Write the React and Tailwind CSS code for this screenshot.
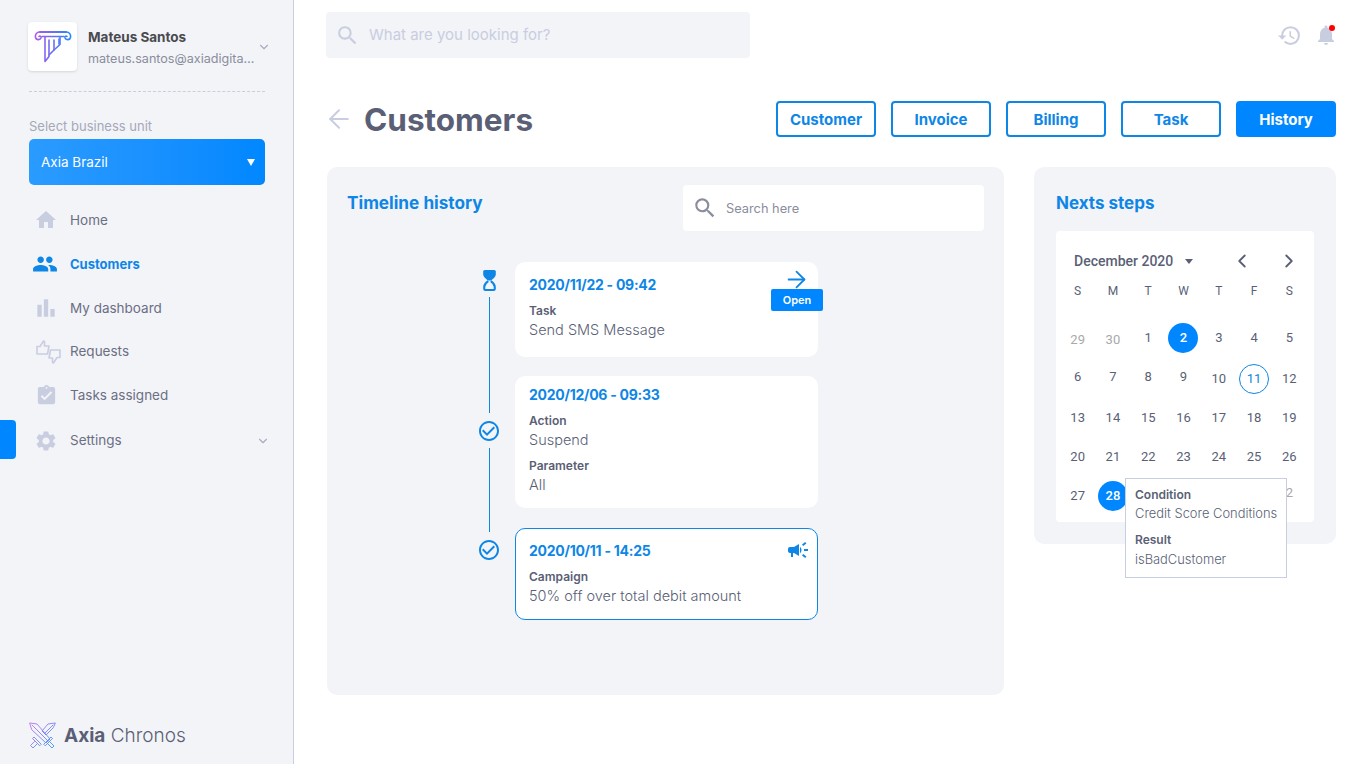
import React from "react";
import { ArrowLeft, ArrowRight, ChevronDown, ChevronLeft, ChevronRight } from "lucide-react";
import {
  MdAssignmentTurnedIn,
  MdBarChart,
  MdCampaign,
  MdCheckCircleOutline,
  MdHistory,
  MdHome,
  MdNotifications,
  MdPeople,
  MdSearch,
  MdSettings,
} from "react-icons/md";

function PillarLogo() {
  return (
    <svg width="38" height="34" viewBox="0 0 38 34" fill="none" strokeWidth="1.6" strokeLinecap="round" strokeLinejoin="round">
      <defs>
        <linearGradient id="pillar" x1="0" y1="0" x2="38" y2="0" gradientUnits="userSpaceOnUse">
          <stop offset="0" stopColor="#b455e8" />
          <stop offset="1" stopColor="#1d8bff" />
        </linearGradient>
      </defs>
      <g stroke="url(#pillar)">
        <path d="M6 2h26" strokeWidth="2.2" />
        <path d="M6 2C2 2 1 5 1.5 7.500 2 10 6 10.500 7 8 7.500 6.500 6 5.500 5 6.500" />
        <path d="M32 2c4 0 5 3 4.500 5.500-.5 2.500-4.500 3-5.500.5-.5-1.500 1-2.500 2-1.500" />
        <path d="M8 6.500h22" />
        <path d="M11 7v24.500l4-5V10" />
        <path d="M15 25l5-5V10" />
        <path d="M20 20l6-5.500V7" />
        <path d="M25 9v5" />
      </g>
    </svg>
  );
}

function SwordsLogo() {
  return (
    <svg width="27" height="28" viewBox="0 0 27 28" fill="none" strokeWidth="0.9" strokeLinejoin="round" strokeLinecap="round">
      <defs>
        <linearGradient id="swords" x1="0" y1="0" x2="27" y2="28" gradientUnits="userSpaceOnUse">
          <stop offset="0" stopColor="#c86be6" />
          <stop offset="1" stopColor="#2d9bff" />
        </linearGradient>
      </defs>
      <g stroke="url(#swords)">
        <path d="M1 1l7 1 13 15-4 4L3 8z" />
        <path d="M3 3l16 16" />
        <path d="M26 1l-7 1-6 7 4 4 7-7z" />
        <path d="M24 3l-8 8" />
        <path d="M15 22l7-7 1.500 1.500-7 7z" />
        <path d="M19 22l4 4 2-2-4-4" />
        <path d="M12 22L5 15l-1.500 1.500 7 7z" />
        <path d="M8 22l-4 4-2.500-2.500 4-4" />
      </g>
    </svg>
  );
}

function RequestsIcon() {
  return (
    <svg width="25" height="24" viewBox="0 0 25 24" fill="none" stroke="#c9cde0" strokeWidth="1.600" strokeLinejoin="round" strokeLinecap="round">
      <path d="M1 14V6.500h3L7.500 1l1 .5v4.500H13L11.500 14z" />
      <path d="M24 10v7.500h-3L17.500 23l-1-.5V18H13l1.500-8z" />
    </svg>
  );
}

function HourglassIcon() {
  return (
    <svg width="13" height="21" viewBox="0 0 12 20" className="mt-[8px] shrink-0">
      <path fill="#0e86e6" d="M1.500 0H10.500Q12 0 12 1.500V4Q12 6.500 7.500 10H4.500Q0 6.500 0 4V1.500Q0 0 1.500 0Z" />
      <path fill="none" stroke="#0e86e6" strokeWidth="2" d="M4.800 10.500Q1 13 1 16V18Q1 19 2 19H10Q11 19 11 18V16Q11 13 7.200 10.500" />
    </svg>
  );
}

function NavItem({ icon, label, active, className, children }) {
  return (
    <div className={`flex items-center ${className}`}>
      <div className="flex w-[41px] items-center justify-start">{icon}</div>
      <span className={active ? "pt-[2px] text-[13px] font-bold text-[#0e86e6]" : "text-[13.500px] text-[#6b6f84]"}>{label}</span>
      {children}
    </div>
  );
}

function Sidebar() {
  return (
    <aside className="relative flex h-full w-[294px] shrink-0 flex-col border-r border-[#c9cde0] bg-[#f3f4f8] pl-[29px] pr-[28px]">
      <div className="-mr-[8px] mt-[22px] flex items-center">
        <div className="-ml-px flex h-[49px] w-[49px] shrink-0 items-center justify-center rounded-[4px] bg-white shadow-sm">
          <PillarLogo />
        </div>
        <div className="ml-[11px] w-[167px] min-w-0">
          <div className="pt-[2px] text-[13.500px] font-bold leading-[18px] text-[#4a4a4f]">Mateus Santos</div>
          <div className="mt-[4px] truncate text-[12.600px] leading-[18px] text-[#8a8d9c]">mateus.santos@axiadigital.com</div>
        </div>
        <ChevronDown className="ml-[2px] h-[14px] w-[14px] shrink-0 text-[#a9adc0]" />
      </div>
      <div className="mt-[20px] border-t border-dashed border-[#c9cde0]" />
      <div className="mt-[26px] text-[13px] leading-[16px] text-[#a5a8b8]">Select business unit</div>
      <div className="mt-[5px] flex h-[46px] items-center justify-between rounded-[5px] bg-gradient-to-r from-[#2a9bff] to-[#0087ff] pl-[12px] pr-[10px]">
        <span className="text-[13.500px] text-white">Axia Brazil</span>
        <span className="h-0 w-0 border-x-[4px] border-t-[7px] border-x-transparent border-t-white" />
      </div>
      <nav className="mt-[13px] flex flex-col">
        <NavItem className="h-[44px]" label="Home" icon={<MdHome className="ml-[5px] h-[24px] w-[24px] text-[#c9cde0]" />} />
        <NavItem className="h-[44px]" active label="Customers" icon={<MdPeople className="ml-[3px] h-[26px] w-[26px] text-[#0e86e6]" />} />
        <NavItem className="h-[44px]" label="My dashboard" icon={<MdBarChart className="ml-[4px] h-[26px] w-[26px] text-[#c9cde0]" />} />
        <NavItem className="h-[43px]" label="Requests" icon={<div className="ml-[7px]"><RequestsIcon /></div>} />
        <NavItem className="h-[44px]" label="Tasks assigned" icon={<MdAssignmentTurnedIn className="ml-[6px] h-[23px] w-[23px] text-[#c9cde0]" />} />
        <NavItem className="h-[45px] pt-[2px]" label="Settings" icon={<MdSettings className="ml-[5px] h-[24px] w-[24px] text-[#c9cde0]" />}>
          <ChevronDown className="ml-auto mr-[-5px] h-[14px] w-[14px] text-[#a9adc0]" />
        </NavItem>
      </nav>
      <div className="absolute left-0 top-[420px] h-[39px] w-[16px] rounded-r-[4px] bg-[#0087ff]" />
      <div className="mb-[14px] mt-auto flex items-center">
        <SwordsLogo />
        <span className="ml-[8px] text-[19px] text-[#5a5f76]">
          <b className="font-bold">Axia</b> <span className="font-light">Chronos</span>
        </span>
      </div>
    </aside>
  );
}

function TopBar() {
  return (
    <div className="flex items-center justify-between">
      <div className="-ml-px flex h-[46px] w-[424px] items-center rounded-[4px] bg-[#f3f4f8] pl-[9px]">
        <MdSearch className="h-[25px] w-[25px] text-[#c9cde0]" />
        <span className="ml-[9px] text-[15px] text-[#c9cde0]">What are you looking for?</span>
      </div>
      <div className="-mr-[2px] flex items-center gap-[12px]">
        <MdHistory className="h-[25px] w-[25px] text-[#c9cde0]" />
        <div className="relative">
          <MdNotifications className="h-[24px] w-[24px] text-[#c9cde0]" />
          <span className="absolute right-[3px] top-[2px] h-[6px] w-[6px] rounded-full bg-[#f00]" />
        </div>
      </div>
    </div>
  );
}

function TabButton({ label, active }) {
  return (
    <button
      className={
        active
          ? "h-[36px] w-[100px] rounded-[4px] border-2 border-[#0087ff] bg-[#0087ff] pt-[2px] text-[15px] font-bold text-white"
          : "h-[36px] w-[100px] rounded-[4px] border-2 border-[#0e86e6] bg-white pt-[2px] text-[15px] font-bold text-[#0e86e6]"
      }
    >
      {label}
    </button>
  );
}

function Field({ label, value, className }) {
  return (
    <div className={className}>
      <div className="text-[12px] font-semibold leading-[14px] text-[#5a5f76]">{label}</div>
      <div className="mt-[2px] text-[14.500px] font-light leading-[20px] text-[#5a5f76]">{value}</div>
    </div>
  );
}

function DateTitle({ children }) {
  return <div className="text-[14px] font-bold leading-[20px] tracking-[-0.26px] text-[#0e86e6]">{children}</div>;
}

function Timeline() {
  return (
    <div className="flex flex-col pl-[142px]">
      {/* row 1 */}
      <div className="flex h-[114px]">
        <div className="flex w-[46px] flex-col items-center pr-[6px]">
          <HourglassIcon />
          <div className="mt-[6px] w-px flex-1 bg-[#0e86e6]" />
        </div>
        <div className="relative h-[95px] w-[303px] rounded-[10px] bg-white pl-[14px] pt-[13px]">
          <DateTitle>2020/11/22 - 09:42</DateTitle>
          <Field className="mt-[9px]" label="Task" value="Send SMS Message" />
          <ArrowRight className="absolute right-[8px] top-[4px] h-[27px] w-[27px] text-[#0e86e6]" strokeWidth={1.600} />
          <div className="absolute right-[-5px] top-[27px] flex h-[22px] w-[52px] items-center justify-center rounded-[2px] bg-[#0087ff] text-[11px] font-semibold text-white">
            Open
          </div>
        </div>
      </div>
      {/* row 2 */}
      <div className="flex h-[152px]">
        <div className="flex w-[46px] flex-col items-center pr-[6px]">
          <div className="h-[37px] w-px bg-[#0e86e6]" />
          <MdCheckCircleOutline className="mb-[5px] mt-[6px] h-[24px] w-[24px] shrink-0 text-[#0e86e6]" />
          <div className="w-px flex-1 bg-[#0e86e6]" />
        </div>
        <div className="h-[132px] w-[303px] rounded-[10px] bg-white pl-[14px] pt-[9px]">
          <DateTitle>2020/12/06 - 09:33</DateTitle>
          <Field className="mt-[9px]" label="Action" value="Suspend" />
          <Field className="mt-[9px]" label="Parameter" value="All" />
        </div>
      </div>
      {/* row 3 */}
      <div className="flex">
        <div className="flex w-[46px] flex-col items-center pr-[6px]">
          <div className="h-[4px] w-px bg-[#0e86e6]" />
          <MdCheckCircleOutline className="mt-[6px] h-[24px] w-[24px] text-[#0e86e6]" />
        </div>
        <div className="relative h-[92px] w-[303px] rounded-[10px] border border-[#0e86e6] bg-white pl-[13px] pt-[12px]">
          <DateTitle>2020/10/11 - 14:25</DateTitle>
          <Field className="mt-[9px]" label="Campaign" value="50% off over total debit amount" />
          <MdCampaign className="absolute right-[7px] top-[9px] h-[24px] w-[24px] text-[#0e86e6]" />
        </div>
      </div>
    </div>
  );
}

const WEEK = ["S", "M", "T", "W", "T", "F", "S"];
// pad: small vertical nudges, the rows in the picture are not evenly spaced
const DOWN2 = "pt-[4px]";
const DOWN1 = "pt-[2px]";
const UP2 = "pb-[4px]";
const DAYS = [
  { n: 29, tone: "muted", pad: DOWN2 }, { n: 30, tone: "muted", pad: DOWN2 }, { n: 1 }, { n: 2, tone: "selected" }, { n: 3 }, { n: 4 }, { n: 5 },
  { n: 6 }, { n: 7 }, { n: 8 }, { n: 9 }, { n: 10, pad: DOWN2 }, { n: 11, tone: "today", pad: DOWN2 }, { n: 12, pad: DOWN2 },
  { n: 13, pad: DOWN2 }, { n: 14, pad: DOWN2 }, { n: 15, pad: DOWN2 }, { n: 16, pad: DOWN2 }, { n: 17, pad: DOWN2 }, { n: 18, pad: DOWN2 }, { n: 19, pad: DOWN2 },
  { n: 20, pad: DOWN1 }, { n: 21, pad: DOWN1 }, { n: 22, pad: DOWN1 }, { n: 23, pad: DOWN1 }, { n: 24, pad: DOWN1 }, { n: 25, pad: DOWN1 }, { n: 26, pad: DOWN1 },
  // the four days after 28 sit under the tooltip and can't be seen
  { n: 27, pad: DOWN1 }, { n: 28, tone: "selected", pad: DOWN1 }, { n: "" }, { n: "" }, { n: "" }, { n: "" }, { n: 2, tone: "muted", pad: UP2 },
];

function Day({ n, tone, pad = "" }) {
  let cls = "text-[#5a5f76]";
  if (tone === "muted") cls = "text-[#a9a9a9]";
  if (tone === "selected") cls = "h-[30px] w-[30px] rounded-full bg-[#0087ff] font-medium text-white";
  if (tone === "today") cls = "h-[30px] w-[30px] rounded-full border border-[#0e86e6] text-[#0e86e6]";
  return (
    <div className={`flex h-[39.300px] items-center justify-center ${pad}`}>
      <span className={`flex items-center justify-center text-[13px] ${cls}`}>{n}</span>
    </div>
  );
}

function Calendar() {
  return (
    <div className="mt-[16px] h-[291px] rounded-[4px] bg-white pl-[4px] pr-[7px] pt-[18px] font-[Roboto,sans-serif]">
      <div className="flex h-[24px] items-center pl-[14px]">
        <span className="text-[14px] font-medium text-[#5a5f76]">December 2020</span>
        <span className="ml-[12px] h-0 w-0 border-x-[4px] border-t-[5px] border-x-transparent border-t-[#5a5f76]" />
        <ChevronLeft className="ml-[38px] h-[22px] w-[22px] text-[#5a5f76]" strokeWidth={2} />
        <ChevronRight className="ml-[25px] h-[22px] w-[22px] text-[#5a5f76]" strokeWidth={2} />
      </div>
      <div className="mt-[5px] grid grid-cols-7">
        {WEEK.map((d, i) => (
          <div key={i} className="flex h-[26px] items-center justify-center text-[12px] text-[#5a5f76]">
            {d}
          </div>
        ))}
      </div>
      <div className="mt-[14px] grid grid-cols-7">
        {DAYS.map((d, i) => (
          <Day key={i} {...d} />
        ))}
      </div>
    </div>
  );
}

export default function App() {
  return (
    <div className="flex h-[764px] w-[1366px] overflow-hidden bg-white font-[Inter,sans-serif]">
      <Sidebar />
      <main className="flex min-w-0 flex-1 flex-col pl-[33px] pr-[30px] pt-[12px]">
        <TopBar />
        <div className="mt-[43px] flex h-[36px] items-center">
          <ArrowLeft className="-ml-[3px] h-[30px] w-[30px] shrink-0 text-[#c9cde0]" strokeWidth={1.600} />
          <h1 className="ml-[10px] pt-[2px] text-[31.500px] font-bold text-[#5a5f76]">Customers</h1>
          <div className="ml-auto flex gap-[15px]">
            <TabButton label="Customer" />
            <TabButton label="Invoice" />
            <TabButton label="Billing" />
            <TabButton label="Task" />
            <TabButton label="History" active />
          </div>
        </div>
        <div className="mt-[30px] flex items-start gap-[30px]">
          <section className="h-[528px] w-[677px] rounded-[10px] bg-[#f3f4f8] pl-[20px] pr-[20px] pt-[18px]">
            <div className="flex items-start justify-between">
              <h2 className="mt-[5px] text-[17.200px] font-bold text-[#0e86e6]">Timeline history</h2>
              <div className="flex h-[46px] w-[301px] items-center rounded-[4px] bg-white pl-[9px]">
                <MdSearch className="h-[26px] w-[26px] text-[#8a8d9c]" />
                <span className="ml-[8px] pt-[2px] text-[12.800px] text-[#8a8d9c]">Search here</span>
              </div>
            </div>
            <div className="-ml-[20px] mt-[31px]">
              <Timeline />
            </div>
          </section>
          <section className="relative h-[377px] w-[302px] rounded-[10px] bg-[#f3f4f8] pl-[22px] pr-[22px] pt-[25px]">
            <h2 className="text-[17px] font-bold leading-[23px] text-[#0e86e6]">Nexts steps</h2>
            <Calendar />
            <div className="absolute left-[91px] top-[311px] h-[100px] w-[162px] border border-[#c9cde0] bg-white pl-[9px] pt-[9px]">
              <div className="text-[12px] font-semibold leading-[14px] text-[#5a5f76]">Condition</div>
              <div className="mt-[3px] text-[12.900px] font-light leading-[18px] text-[#5a5f76]">Credit Score Conditions</div>
              <div className="mt-[10px] text-[12px] font-semibold leading-[14px] text-[#5a5f76]">Result</div>
              <div className="mt-[4px] text-[12.900px] font-light leading-[18px] text-[#5a5f76]">isBadCustomer</div>
            </div>
          </section>
        </div>
      </main>
    </div>
  );
}
